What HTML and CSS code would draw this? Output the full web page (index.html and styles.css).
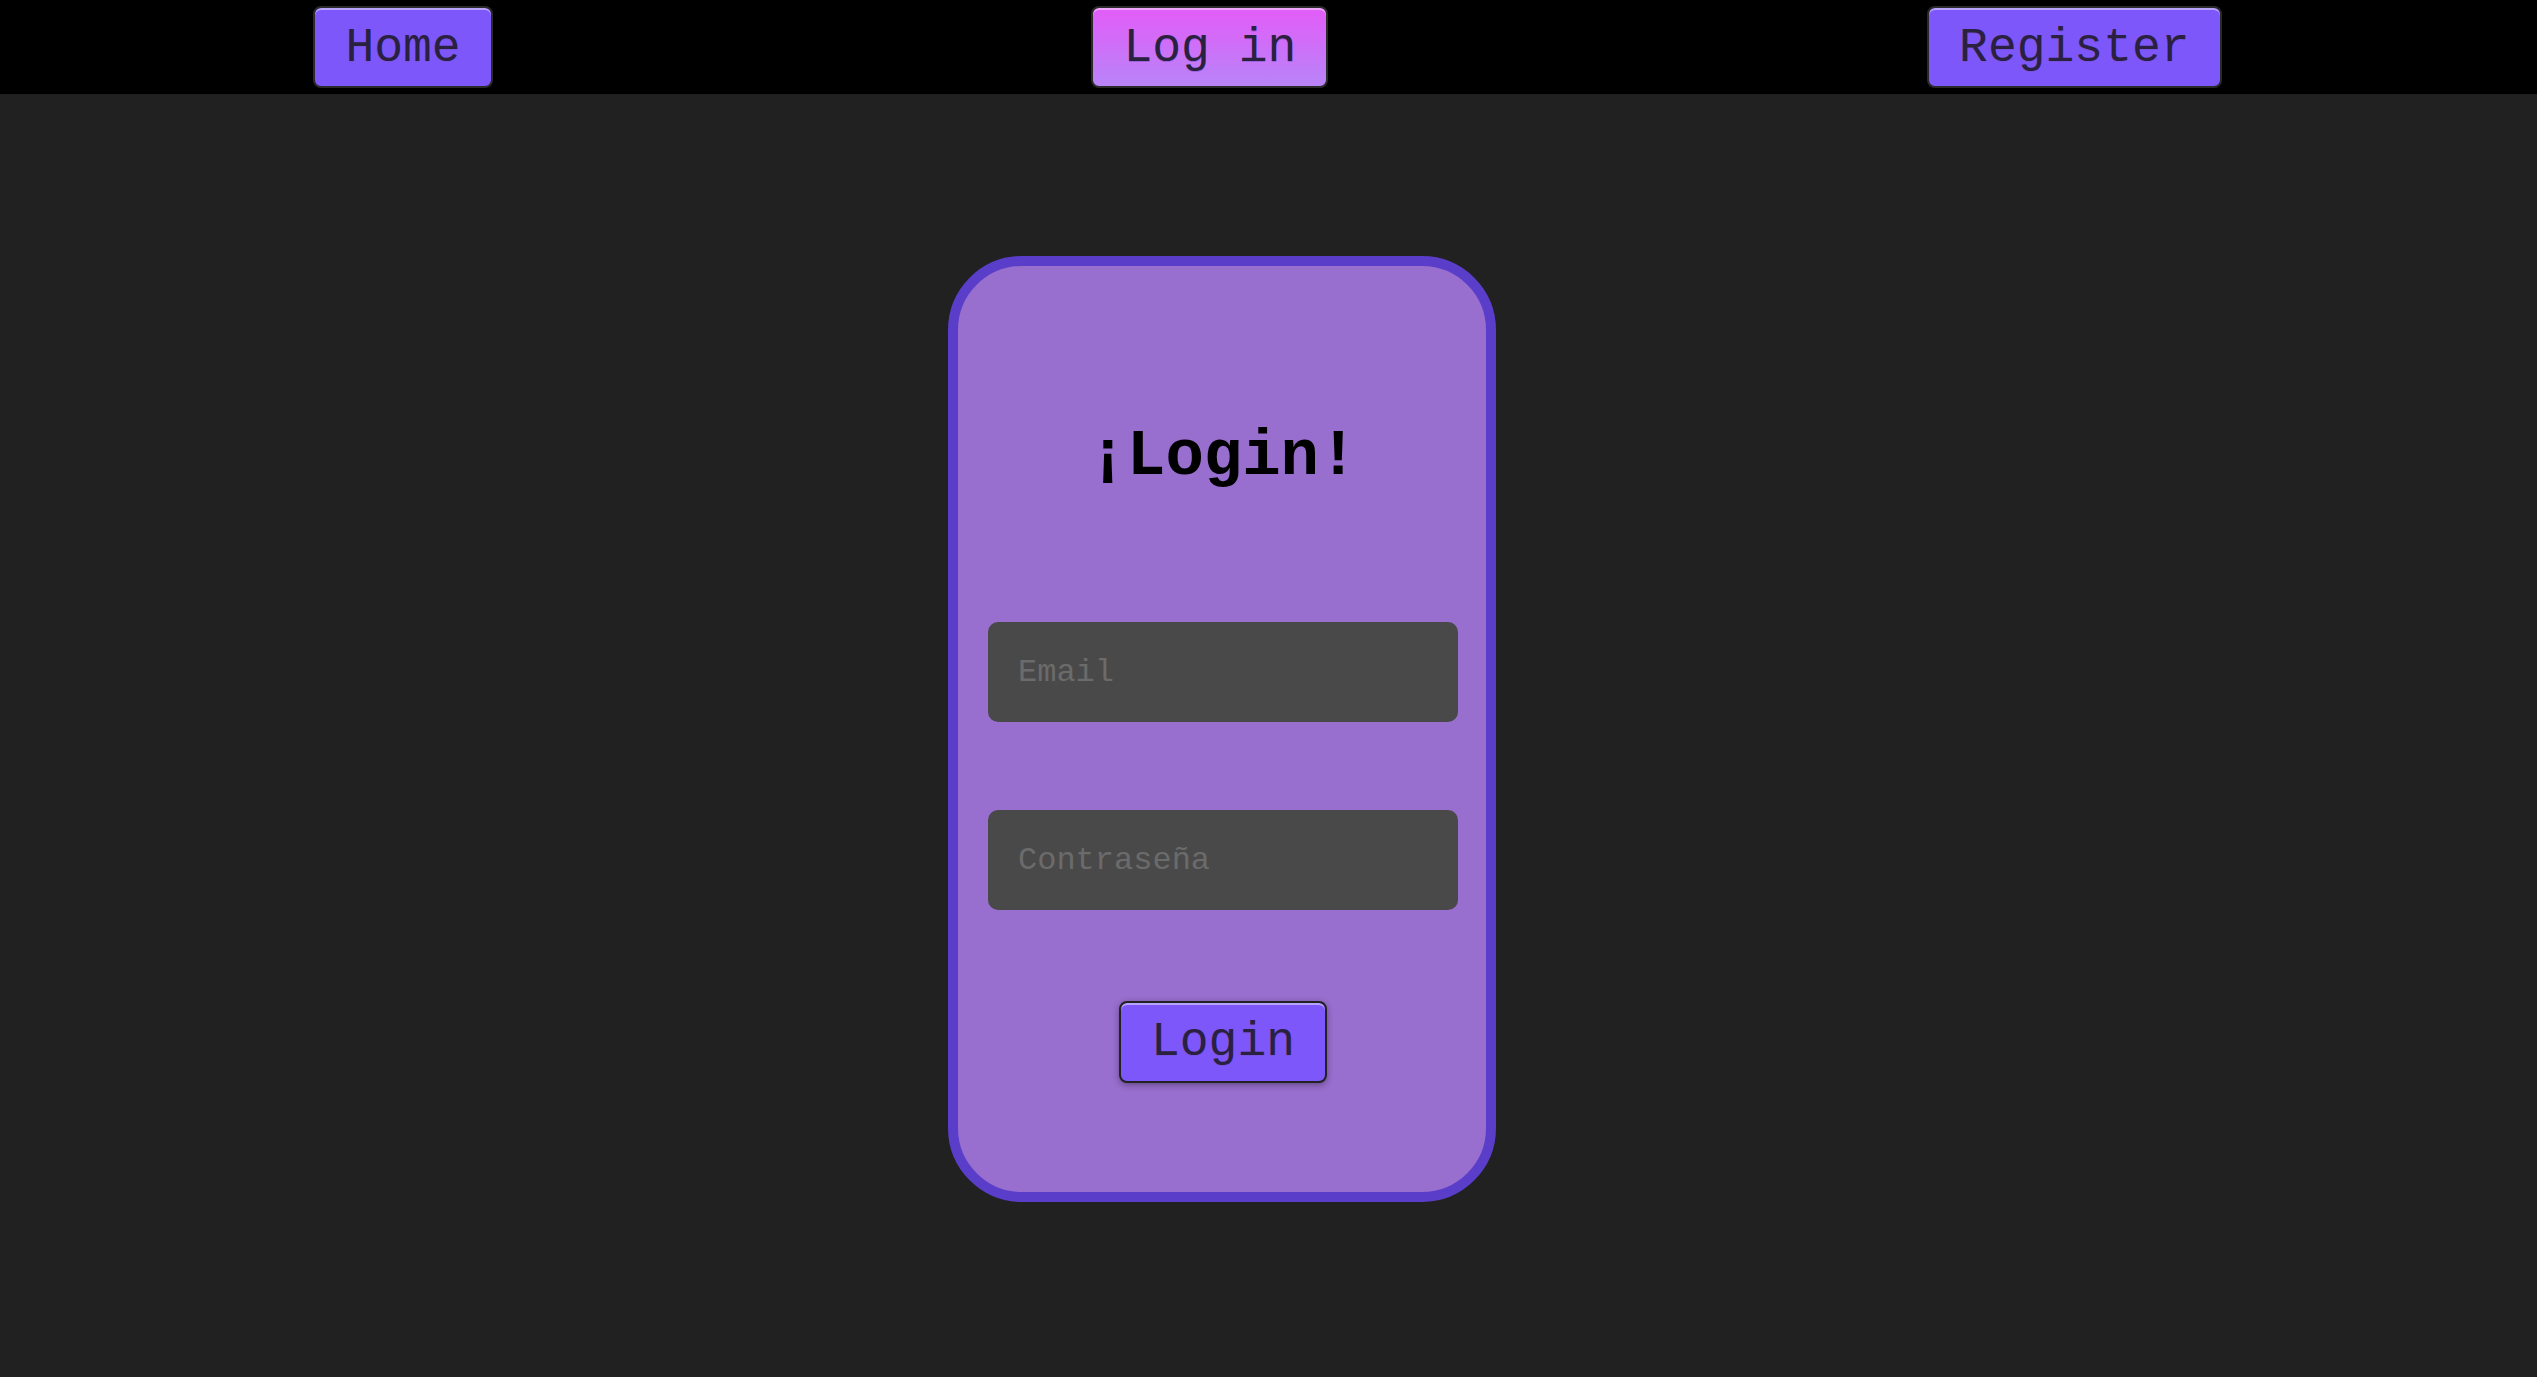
FILE: index.html
```html
<!DOCTYPE html>
<html lang="es">
<head>
<meta charset="utf-8">
<title>Login</title>
<link rel="stylesheet" href="styles.css">
</head>
<body>
<header class="topbar">
  <nav class="nav">
    <a class="nav-btn" href="#">Home</a>
    <a class="nav-btn nav-btn-active" href="#">Log in</a>
    <a class="nav-btn" href="#">Register</a>
  </nav>
</header>
<main class="main">
  <form class="card">
    <h1 class="card-title">¡Login!</h1>
    <input class="field field-email" type="email" placeholder="Email">
    <input class="field field-pass" type="password" placeholder="Contraseña">
    <button class="submit" type="button">Login</button>
  </form>
</main>
</body>
</html>
```
FILE: styles.css
```css
* { box-sizing: border-box; }
html, body { margin: 0; padding: 0; }
body {
  background: #212121;
  font-family: "Liberation Mono", "Courier New", monospace;
  min-height: 1377px;
}
.topbar {
  background: #000;
  height: 94px;
  padding: 6px 16px 6px 14px;
}
.nav {
  display: flex;
  justify-content: space-around;
  align-items: flex-start;
}
.nav-btn {
  display: inline-block;
  font-family: "Liberation Mono", "Courier New", monospace;
  font-size: 48px;
  line-height: 54px;
  padding: 13px 30px 11px;
  color: #2a2040;
  text-decoration: none;
  background: #7d57fa;
  border: 2px solid #2a2a2a;
  border-radius: 8px;
  box-shadow: inset 0 2px 0 rgba(255,255,255,0.45);
  text-shadow: 0 1px 0 rgba(120,80,200,0.5);
}
.nav-btn-active {
  background: linear-gradient(to bottom, #e35cf8, #b884f8);
}
.main {
  display: flex;
  justify-content: center;
  padding: 162px 93px 0 0;
}
.card {
  width: 548px;
  border: 10px solid #5a3ec9;
  border-radius: 74px;
  background: #986ece;
  padding: 155px 28px 109px 30px;
  display: flex;
  flex-direction: column;
  align-items: center;
}
.card-title {
  margin: 0 0 129px 0;
  font-family: "Liberation Mono", "Courier New", monospace;
  font-weight: bold;
  font-size: 64px;
  line-height: 72px;
  color: #000;
  text-align: center;
}
.field {
  display: block;
  width: 470px;
  height: 100px;
  border: none;
  border-radius: 10px;
  background: #494949;
  padding: 0 30px;
  font-family: "Liberation Mono", "Courier New", monospace;
  font-size: 32px;
  color: #ddd;
  outline: none;
}
.field::placeholder { color: #6b6b6b; }
.field-email { margin-bottom: 88px; }
.field-pass { margin-bottom: 91px; }
.submit {
  font-family: "Liberation Mono", "Courier New", monospace;
  font-size: 48px;
  line-height: 54px;
  padding: 12px 30px;
  color: #2a2040;
  background: #7d57fa;
  border: 2px solid #222;
  border-radius: 8px;
  box-shadow: inset 0 2px 0 rgba(255,255,255,0.45), 0 2px 6px rgba(0,0,0,0.35);
  text-shadow: 0 1px 0 rgba(120,80,200,0.5);
  cursor: pointer;
}
```
